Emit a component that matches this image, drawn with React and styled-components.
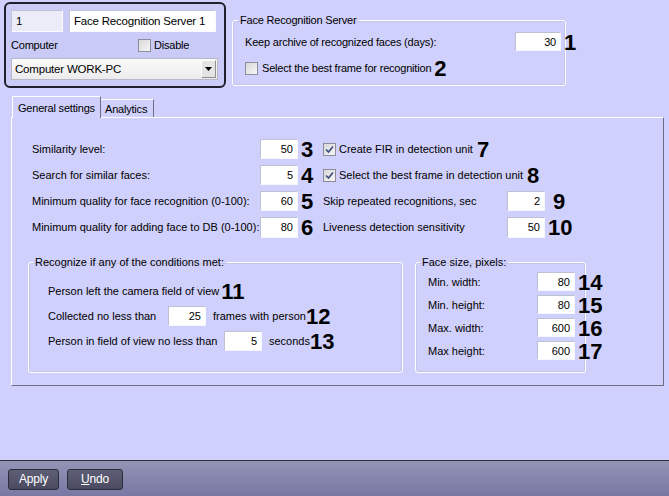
import React from 'react';
import styled, { createGlobalStyle, css } from 'styled-components';

const GlobalStyle = createGlobalStyle`
  html, body {
    margin: 0;
    padding: 0;
    background: #d0d0fc;
  }
  body {
    font-family: "Liberation Sans", Arial, sans-serif;
    font-size: 11px;
    letter-spacing: -0.2px;
    color: #000;
  }
`;

const Page = styled.div`
  width: 669px;
  height: 496px;
  background: #d0d0fc;
  display: flex;
  flex-direction: column;
  overflow: hidden;
`;

const Header = styled.div`
  display: flex;
  align-items: flex-start;
  gap: 6px;
  padding: 2px 0 0 4px;
`;

const Card = styled.div`
  box-sizing: border-box;
  width: 222px;
  height: 86px;
  border: 2px solid #20202c;
  border-radius: 6px;
  background: #cacaf6;
  padding: 6px 5px 0 5px;
  display: flex;
  flex-direction: column;
`;

const CardRow = styled.div`
  display: flex;
  align-items: center;
  gap: 6px;
  height: ${(p) => p.h || 22}px;
`;

const TextInput = styled.div`
  box-sizing: border-box;
  height: 22px;
  width: ${(p) => p.w}px;
  background: ${(p) => (p.dim ? '#ececf8' : '#ffffff')};
  border: 1px solid;
  border-color: #c4c4d8 #fafaff #fafaff #c4c4d8;
  padding: 0 4px;
  display: flex;
  align-items: center;
  font-size: 11.5px;
  white-space: nowrap;
`;

const NumInput = styled.div`
  box-sizing: border-box;
  width: ${(p) => p.w || 38}px;
  height: ${(p) => p.h || 20}px;
  background: #fff;
  border: 1px solid;
  border-color: #c0c0d4 #f6f6ff #f6f6ff #c0c0d4;
  display: flex;
  align-items: center;
  justify-content: flex-end;
  padding-right: 4px;
  font-size: 11px;
  flex-shrink: 0;
`;

const Select = styled.div`
  box-sizing: border-box;
  width: 207px;
  height: 22px;
  border: 1px solid #b8b8c8;
  background: linear-gradient(#fafafa, #ececec);
  display: flex;
  align-items: center;
  padding-left: 3px;
  font-size: 11.5px;
`;

const SelectLabel = styled.span`
  flex: 1;
`;

const DropButton = styled.div`
  width: 15px;
  height: 18px;
  margin-right: 1px;
  box-sizing: border-box;
  border: 1px solid;
  border-color: #ffffff #909090 #909090 #ffffff;
  background: #e4e4e4;
  display: flex;
  align-items: center;
  justify-content: center;
`;

const Frame = styled.fieldset`
  box-sizing: border-box;
  margin: 0;
  border: 1px solid #ffffff;
  box-shadow: inset 0 0 0 0.5px #b8b8d8;
  border-radius: 3px;
  padding: ${(p) => p.pad || '0'};
  width: ${(p) => p.w}px;
  height: ${(p) => p.h}px;
  min-width: 0;
`;

const Legend = styled.legend`
  padding: 0 2px;
  margin-left: ${(p) => p.ml ?? 4}px;
  font-size: 11px;
  line-height: 14px;
`;

const ServerFrame = styled(Frame)`
  margin-top: 11px;
`;

const Row = styled.div`
  display: flex;
  align-items: center;
  height: ${(p) => p.h || 20}px;
  white-space: nowrap;
`;

const Label = styled.span`
  width: ${(p) => p.w}px;
  flex-shrink: 0;
  white-space: nowrap;
`;

const Mark = styled.span`
  font-family: "Liberation Sans", Arial, sans-serif;
  font-weight: bold;
  font-size: 22px;
  letter-spacing: 0;
  line-height: 20px;
  margin-left: ${(p) => p.ml ?? 3}px;
  position: relative;
  top: 1px;
  white-space: nowrap;
`;

const Box = styled.span`
  box-sizing: border-box;
  width: 13px;
  height: 13px;
  border: 1px solid #8c8c9c;
  background: linear-gradient(135deg, #d8d8d8, #f6f6f6);
  display: inline-flex;
  align-items: center;
  justify-content: center;
  flex-shrink: 0;
  margin-right: ${(p) => p.mr ?? 3}px;
`;

function Check({ checked, mr }) {
  return (
    <Box mr={mr}>
      {checked && (
        <svg width="9" height="9" viewBox="0 0 9 9">
          <path d="M1 4.5 L3.5 7 L8 1.5" fill="none" stroke="#3a4a7a" strokeWidth="1.6" />
        </svg>
      )}
    </Box>
  );
}

const Tabs = styled.div`
  margin: 8px 0 0 11px;
  width: 653px;
`;

const TabStrip = styled.div`
  display: flex;
  align-items: flex-end;
  padding-left: 1px;
  height: 21px;
  position: relative;
  z-index: 1;
`;

const Tab = styled.div`
  box-sizing: border-box;
  display: flex;
  align-items: center;
  border: 1px solid;
  border-color: #ffffff #6e6e80 transparent #ffffff;
  border-bottom: none;
  background: #d0d0fc;
  font-size: 11px;
  ${(p) =>
    p.active
      ? css`
          height: 22px;
          margin-bottom: -1px;
          width: 89px;
          padding-left: 5px;
        `
      : css`
          height: 18px;
          border-left: none;
          width: 53px;
          padding-left: 4px;
        `}
`;

const Panel = styled.div`
  box-sizing: border-box;
  height: 269px;
  border: 1px solid;
  border-color: #ffffff #6e6e80 #6e6e80 #ffffff;
  padding: 21px 0 0 16px;
  display: flex;
  flex-direction: column;
  font-size: 11px;
  letter-spacing: 0;
  white-space: nowrap;
`;

const FieldGrid = styled.div`
  display: grid;
  grid-template-columns: 228px 38px 25px 184px 38px auto;
  grid-auto-rows: 20px;
  row-gap: 6px;
  align-items: center;
  margin-left: 4px;
`;

const CheckCell = styled.div`
  grid-column: 4 / span 3;
  display: flex;
  align-items: center;
`;

const Lower = styled.div`
  display: flex;
  gap: 12px;
  margin-top: 18px;
`;

const CondRows = styled.div`
  display: flex;
  flex-direction: column;
  gap: 5px;
  padding: 12px 0 0 19px;
`;

const SizeRows = styled.div`
  display: grid;
  grid-template-columns: 109px 38px auto;
  grid-auto-rows: 19px;
  row-gap: 4px;
  align-items: center;
  padding: 3px 0 0 12px;
`;

const Spacer = styled.div`
  flex: 1;
`;

const Footer = styled.div`
  height: 34px;
  border-top: 1px solid #30303c;
  background: linear-gradient(#9494b6, #7878a4);
  display: flex;
  align-items: center;
  gap: 8px;
  padding-left: 8px;
  padding-top: 1px;
`;

const Button = styled.div`
  box-sizing: border-box;
  width: ${(p) => p.w}px;
  height: 21px;
  border: 1px solid #2c2c3a;
  border-radius: 3px;
  background: linear-gradient(#5e5e76, #4a4a60);
  color: #fff;
  display: flex;
  align-items: center;
  justify-content: center;
  font-size: 12px;
  u {
    text-decoration: underline;
  }
`;

export default function App() {
  return (
    <Page>
      <GlobalStyle />
      <Header>
        <Card>
          <CardRow>
            <TextInput w={52} dim>1</TextInput>
            <TextInput w={147}>Face Recognition Server 1</TextInput>
          </CardRow>
          <CardRow h={26}>
            <Label w={121}>Computer</Label>
            <Row>
              <Check />
              <span>Disable</span>
            </Row>
          </CardRow>
          <CardRow>
            <Select>
              <SelectLabel>Computer WORK-PC</SelectLabel>
              <DropButton>
                <svg width="7" height="4" viewBox="0 0 7 4">
                  <path d="M0 0 H7 L3.5 4 Z" fill="#000" />
                </svg>
              </DropButton>
            </Select>
          </CardRow>
        </Card>
        <ServerFrame w={334} h={73} pad="4px 0 0 12px">
          <Legend ml={-7}>Face Recognition Server</Legend>
          <Row h={21}>
            <Label w={270}>Keep archive of recognized faces (days):</Label>
            <NumInput w={46} h={19}>30</NumInput>
            <Mark>1</Mark>
          </Row>
          <Row h={20} style={{ marginTop: 6 }}>
            <Check mr={4} />
            <span>Select the best frame for recognition</span>
            <Mark>2</Mark>
          </Row>
        </ServerFrame>
      </Header>

      <Tabs>
        <TabStrip>
          <Tab active>General settings</Tab>
          <Tab>Analytics</Tab>
        </TabStrip>
        <Panel>
          <FieldGrid>
            <span>Similarity level:</span>
            <NumInput>50</NumInput>
            <Mark>3</Mark>
            <CheckCell>
              <Check checked />
              <span>Create FIR in detection unit</span>
              <Mark ml={4}>7</Mark>
            </CheckCell>

            <span>Search for similar faces:</span>
            <NumInput>5</NumInput>
            <Mark>4</Mark>
            <CheckCell>
              <Check checked />
              <span>Select the best frame in detection unit</span>
              <Mark ml={4}>8</Mark>
            </CheckCell>

            <span>Minimum quality for face recognition (0-100):</span>
            <NumInput>60</NumInput>
            <Mark>5</Mark>
            <span>Skip repeated recognitions, sec</span>
            <NumInput>2</NumInput>
            <Mark ml={8}>9</Mark>

            <span>Minimum quality for adding face to DB (0-100):</span>
            <NumInput h={21}>80</NumInput>
            <Mark>6</Mark>
            <span>Liveness detection sensitivity</span>
            <NumInput h={21}>50</NumInput>
            <Mark>10</Mark>
          </FieldGrid>

          <Lower>
            <Frame w={375} h={118}>
              <Legend>Recognize if any of the conditions met:</Legend>
              <CondRows>
                <Row h={20}>
                  <span>Person left the camera field of view</span>
                  <Mark ml={2}>11</Mark>
                </Row>
                <Row h={20}>
                  <Label w={120}>Collected no less than</Label>
                  <NumInput>25</NumInput>
                  <span style={{ marginLeft: 7 }}>frames with person</span>
                  <Mark ml={0}>12</Mark>
                </Row>
                <Row h={20}>
                  <Label w={176}>Person in field of view no less than</Label>
                  <NumInput>5</NumInput>
                  <span style={{ marginLeft: 7 }}>seconds</span>
                  <Mark ml={0}>13</Mark>
                </Row>
              </CondRows>
            </Frame>
            <Frame w={171} h={118}>
              <Legend>Face size, pixels:</Legend>
              <SizeRows>
                <span>Min. width:</span>
                <NumInput h={19}>80</NumInput>
                <Mark>14</Mark>
                <span>Min. height:</span>
                <NumInput h={19}>80</NumInput>
                <Mark>15</Mark>
                <span>Max. width:</span>
                <NumInput h={19}>600</NumInput>
                <Mark>16</Mark>
                <span>Max height:</span>
                <NumInput h={19}>600</NumInput>
                <Mark>17</Mark>
              </SizeRows>
            </Frame>
          </Lower>
        </Panel>
      </Tabs>

      <Spacer />
      <Footer>
        <Button w={51}>Apply</Button>
        <Button w={56}>
          <span>
            <u>U</u>ndo
          </span>
        </Button>
      </Footer>
    </Page>
  );
}
